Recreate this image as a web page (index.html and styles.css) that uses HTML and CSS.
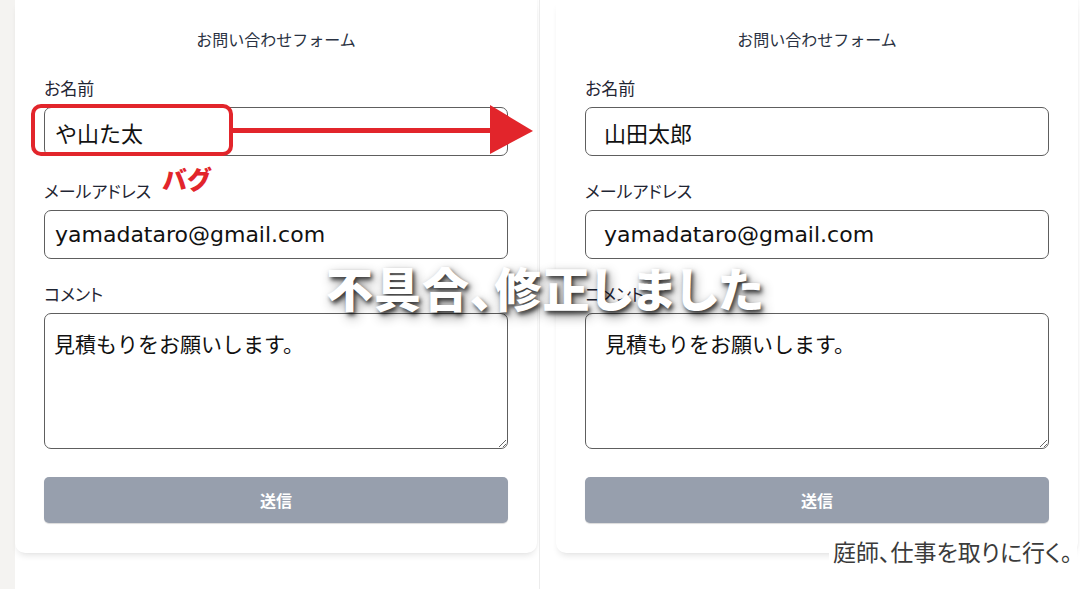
FILE: index.html
```html
<!DOCTYPE html>
<html lang="ja">
<head>
    <meta charset="UTF-8">
    <meta name="viewport" content="width=device-width, initial-scale=1.0">
    <title>お問い合わせフォーム 修正前・修正後</title>
    <link rel="stylesheet" href="styles.css">
</head>
<body>
    <div class="compare">
        <!-- before -->
        <div class="pane pane-before">
            <form class="card form-before">
                <div class="form-title">お問い合わせフォーム</div>
                <label class="field-label">お名前</label>
                <input class="field" type="text" value="や山た太" readonly>
                <label class="field-label">メールアドレス</label>
                <input class="field" type="text" value="yamadataro@gmail.com" readonly>
                <label class="field-label">コメント</label>
                <textarea class="field field-area" readonly>見積もりをお願いします。</textarea>
                <button class="submit" type="button">送信</button>
            </form>
        </div>

        <div class="divider"></div>

        <!-- after -->
        <div class="pane pane-after">
            <form class="card form-after">
                <div class="form-title">お問い合わせフォーム</div>
                <label class="field-label">お名前</label>
                <input class="field" type="text" value="山田太郎" readonly>
                <label class="field-label">メールアドレス</label>
                <input class="field" type="text" value="yamadataro@gmail.com" readonly>
                <label class="field-label">コメント</label>
                <textarea class="field field-area" readonly>見積もりをお願いします。</textarea>
                <button class="submit" type="button">送信</button>
            </form>
        </div>
    </div>

    <!-- annotations drawn over the screenshots -->
    <div class="bug-box"></div>
    <svg class="bug-arrow" width="1080" height="589" viewBox="0 0 1080 589">
        <rect x="233" y="128" width="258" height="5" fill="#e2252b"/>
        <polygon points="490,105 490,154 533,131" fill="#e2252b"/>
    </svg>
    <div class="bug-label">バグ</div>
    <div class="headline">不具合、修正しました</div>
    <div class="caption">庭師、仕事を取りに行く。</div>
</body>
</html>
```

FILE: styles.css
```css
body {
    margin: 0;
    background: #fff;
    font-family: "DejaVu Sans", "Noto Sans CJK JP", sans-serif;
    width: 1080px;
    height: 589px;
    overflow: hidden;
    position: relative;
}

.compare {
    display: flex;
    height: 589px;
}

.pane-before {
    width: 523px;
    border-left: 15px solid #f4f3f1;
    background: #fff;
}

.divider {
    width: 1px;
    margin-left: 1px;
    background: #ececec;
}

.pane-after {
    padding-left: 16px;
}

.card {
    width: 464px;
    padding: 27px 29px 30px;
    background: #fff;
    border-radius: 0 0 10px 10px;
    box-shadow: 0 5px 7px -3px rgba(0, 0, 0, 0.12), 1px 0 2px rgba(0, 0, 0, 0.03);
    display: flex;
    flex-direction: column;
}

.form-title {
    text-align: center;
    font-family: "Noto Sans CJK JP", sans-serif;
    font-size: 16px;
    line-height: 24px;
    color: #2a3242;
    margin-bottom: 25px;
}

.field-label {
    font-family: "Noto Sans CJK JP", sans-serif;
    font-feature-settings: "palt";
    font-size: 17px;
    line-height: 24px;
    color: #1f2533;
    margin-bottom: 7px;
}

.field {
    box-sizing: border-box;
    width: 464px;
    height: 49px;
    margin: 0 0 23px;
    padding: 0 10px;
    border: 1px solid #5e5e5e;
    border-radius: 7px;
    background: #fff;
    font-family: "DejaVu Sans", "Noto Sans CJK JP", sans-serif;
    font-size: 22px;
    color: #111;
    outline: none;
}

.field-area {
    height: 136px;
    margin-bottom: 28px;
    padding: 16px 9px;
    font-size: 21px;
    line-height: 31px;
    resize: vertical;
}

.form-after .field {
    padding-left: 18px;
}

.form-after .field-area {
    padding-left: 19px;
}

.submit {
    height: 46px;
    border: none;
    border-radius: 5px;
    background: #979fad;
    box-shadow: 0 1px 1px rgba(0, 0, 0, 0.15);
    color: #fff;
    font-family: "Noto Sans CJK JP", sans-serif;
    font-size: 16px;
    font-weight: bold;
}

/* annotations */
.bug-box {
    position: absolute;
    left: 31px;
    top: 104px;
    width: 194px;
    height: 44px;
    border: 4px solid #e2252b;
    border-radius: 10px;
}

.bug-arrow {
    position: absolute;
    left: 0;
    top: 0;
}

.bug-label {
    position: absolute;
    left: 162px;
    top: 161px;
    font-family: "Noto Sans CJK JP", sans-serif;
    font-size: 25px;
    line-height: 34px;
    font-weight: 900;
    color: #e2252b;
}

.headline {
    position: absolute;
    left: 326px;
    top: 258px;
    font-family: "Noto Sans CJK JP", sans-serif;
    font-feature-settings: "palt";
    font-size: 47px;
    line-height: 58px;
    letter-spacing: 1px;
    font-weight: 900;
    color: #fff;
    text-shadow: 2px 3px 4px rgba(0, 0, 0, 0.7), 3px 5px 12px rgba(0, 0, 0, 0.45);
}

.caption {
    position: absolute;
    left: 829px;
    top: 535px;
    padding: 0 5px 0 4px;
    background: #fff;
    font-family: "Noto Sans CJK JP", sans-serif;
    font-feature-settings: "palt";
    font-size: 23px;
    line-height: 33px;
    color: #3b3b3b;
}
```
